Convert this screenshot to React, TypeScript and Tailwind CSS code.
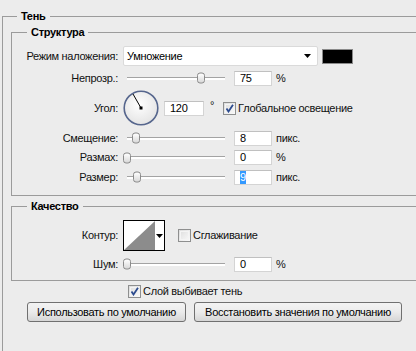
import { FC, ReactNode } from "react";

const font = { fontFamily: '"Liberation Sans", Arial, sans-serif' };

const Title: FC<{ children: ReactNode; inner?: boolean }> = ({ children, inner }) => (
  <div className="flex h-[13px] -mt-[7px]">
    <div className={inner ? "w-[15px] shrink-0" : "w-[6px] shrink-0"} />
    <div className="bg-[#ececec] px-[4px] text-[11px] leading-[13px] font-bold text-black">
      {children}
    </div>
  </div>
);

const Label: FC<{ children: ReactNode }> = ({ children }) => (
  <div className="w-[106px] shrink-0 text-right text-[11px] leading-[13px] text-[#111]">
    {children}
  </div>
);

const Slider: FC<{ pos: number }> = ({ pos }) => {
  return (
    <div className="relative ml-[5px] flex h-full w-[102px] items-center">
      <div className="ml-[4px] h-[3px] w-[98px] border-t border-[#a3a3a3] bg-white" />
      <div
        className="absolute top-1/2 h-[11px] w-[8px] -translate-y-1/2 rounded-[3px] border border-[#8b8b8b] bg-linear-to-b from-white to-[#d9d9d9]"
        style={{ left: pos }}
      />
    </div>
  );
};

const Field: FC<{ value: string; wide?: boolean; selected?: boolean }> = ({
  value,
  wide,
  selected,
}) => (
  <div
    className={`${wide ? "w-[40px]" : "w-[38px]"} flex h-[15px] items-center border border-[#d4d4d4] border-t-[#c0c0c0] bg-white pl-[5px] text-[11px] leading-[13px] text-black`}
  >
    {selected ? <span className="bg-[#3399ff] text-white">{value}</span> : value}
  </div>
);

const Unit: FC<{ children: ReactNode }> = ({ children }) => (
  <span className="ml-[4px] text-[11px] leading-[13px] text-[#111]">{children}</span>
);

const CheckBox: FC<{ checked?: boolean }> = ({ checked }) => (
  <div className="flex h-[13px] w-[13px] shrink-0 items-center justify-center border border-[#8e8f8f] bg-linear-to-br from-[#dcdcdc] to-[#fbfbfb]">
    <div className="h-[9px] w-[9px] border border-[#f4f4f4]">
      {checked && (
        <svg width="9" height="9" viewBox="0 0 9 9" className="-ml-px -mt-px">
          <path d="M1.5 4.5 L3.5 7.5 L8 0.8" fill="none" stroke="#2d4c8f" strokeWidth="1.8" />
        </svg>
      )}
    </div>
  </div>
);

const SliderRow: FC<{
  label: string;
  pos: number;
  value: string;
  unit: string;
  short?: boolean;
  selected?: boolean;
}> = ({ label, pos, value, unit, short, selected }) => (
  <div className={`flex ${short ? "h-[19px]" : "h-[20px]"} items-center`}>
    <Label>{label}</Label>
    <Slider pos={pos} />
    <div className="ml-[9px]">
      <Field value={value} selected={selected} />
    </div>
    <Unit>{unit}</Unit>
  </div>
);

const Dial = () => (
  <svg width="36" height="36" viewBox="0 0 36 36" className="ml-[5px] shrink-0">
    <defs>
      <radialGradient id="dialfill" cx="45%" cy="40%" r="65%">
        <stop offset="0%" stopColor="#ffffff" />
        <stop offset="100%" stopColor="#e2e2e2" />
      </radialGradient>
    </defs>
    <circle cx="18" cy="18" r="16.8" fill="url(#dialfill)" stroke="#56668d" strokeWidth="1.6" />
    <line x1="18" y1="18" x2="10" y2="4" stroke="#000" strokeWidth="1" />
    <rect x="16.5" y="16.5" width="3" height="3" fill="#000" />
  </svg>
);

const Contour = () => (
  <div className="ml-[5px] flex h-[31px] w-[42px] border border-black bg-white">
    <svg width="31" height="29" viewBox="0 0 31 29">
      <polygon points="0,29 31,0 31,29" fill="#8c8c8c" />
    </svg>
    <div className="flex flex-1 items-center justify-center">
      <svg width="7" height="4" viewBox="0 0 7 4">
        <polygon points="0,0 7,0 3.5,4" fill="#000" />
      </svg>
    </div>
  </div>
);

const Button: FC<{ children: ReactNode; wide?: boolean }> = ({ children, wide }) => (
  <button
    className={`${wide ? "w-[208px]" : "w-[159px]"} h-[20px] rounded-[3px] border border-[#707070] bg-linear-to-b from-[#f3f3f3] via-[#ebebeb] to-[#d6d6d6] text-[11px] leading-[13px] tracking-[-0.3px] text-black`}
    style={font}
  >
    {children}
  </button>
);

export default function App() {
  return (
    <div
      className="h-[351px] w-[416px] overflow-hidden bg-[#ececec] tracking-[-0.3px]"
      style={font}
    >
      <div className="ml-[2px] mt-[16px] h-[400px] w-[430px] border-l border-t border-[#9b9b9b] pl-[8px]">
        <Title>Тень</Title>

        <div className="mt-[9px] w-[420px] border border-[#9b9b9b] pb-[8px]">
          <Title inner>Структура</Title>

          <div className="mt-[7px] flex h-[20px] items-center">
            <Label>Режим наложения:</Label>
            <div className="ml-[5px] flex h-[20px] w-[195px] items-center justify-between rounded-[2px] border border-[#dadada] bg-white pl-[3px] pr-[6px] text-[11px] leading-[13px] text-black">
              <span>Умножение</span>
              <svg width="7" height="4" viewBox="0 0 7 4">
                <polygon points="0,0 7,0 3.5,4" fill="#000" />
              </svg>
            </div>
            <div className="ml-[4px] h-[15px] w-[31px] border border-[#8a8a8a] bg-black" />
          </div>

          <div className="mt-[2px]">
            <SliderRow label="Непрозр.:" pos={74} value="75" unit="%" />
          </div>

          <div className="mt-[2px] flex h-[36px] items-center">
            <Label>Угол:</Label>
            <Dial />
            <div className="ml-[5px]">
              <Field value="120" wide />
            </div>
            <span className="ml-[6px] -mt-[6px] text-[11px] leading-[13px] text-[#111]">°</span>
            <div className="ml-[9px]">
              <CheckBox checked />
            </div>
            <span className="ml-[2px] text-[11px] leading-[13px] text-[#111]">
              Глобальное освещение
            </span>
          </div>

          <div className="mt-[2px]">
            <SliderRow label="Смещение:" pos={9} value="8" unit="пикс." />
            <SliderRow label="Размах:" pos={0} value="0" unit="%" short />
            <SliderRow label="Размер:" pos={10} value="9" unit="пикс." selected />
          </div>
        </div>

        <div className="mt-[10px] w-[420px] border border-[#9b9b9b] pb-[6px]">
          <Title inner>Качество</Title>

          <div className="mt-[7px] flex h-[31px] items-center">
            <Label>Контур:</Label>
            <Contour />
            <div className="ml-[13px]">
              <CheckBox />
            </div>
            <span className="ml-[2px] text-[11px] leading-[13px] text-[#111]">Сглаживание</span>
          </div>

          <div className="mt-[3px]">
            <SliderRow label="Шум:" pos={0} value="0" unit="%" />
          </div>
        </div>

        <div className="mt-[2px] ml-[117px] flex h-[16px] items-center">
          <CheckBox checked />
          <span className="ml-[2px] text-[11px] leading-[13px] text-[#111]">
            Слой выбивает тень
          </span>
        </div>

        <div className="mt-[3px] ml-[16px] flex gap-[8px]">
          <Button>Использовать по умолчанию</Button>
          <Button wide>Восстановить значения по умолчанию</Button>
        </div>
      </div>
    </div>
  );
}
